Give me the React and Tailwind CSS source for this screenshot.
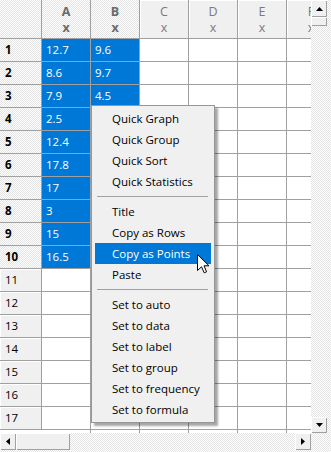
import React from 'react';

const colsA = ['12.7', '8.6', '7.9', '2.5', '12.4', '17.8', '17', '3', '15', '16.5'];
const colsB = ['9.6', '9.7', '4.5'];
const headers = ['A', 'B', 'C', 'D', 'E', 'F'];

const hatch =
  "bg-[image:repeating-conic-gradient(#e3e3e3_0%_25%,#ffffff_0%_50%)] [background-size:2px_2px]";
const raised = 'bg-[#f0f0f0] shadow-[inset_1px_1px_0_#ffffff,inset_-1px_-1px_0_#a0a0a0]';

const menuGroups = [
  ['Quick Graph', 'Quick Group', 'Quick Sort', 'Quick Statistics'],
  ['Title', 'Copy as Rows', 'Copy as Points', 'Paste'],
  ['Set to auto', 'Set to data', 'Set to label', 'Set to group', 'Set to frequency', 'Set to formula'],
];

function Tri({ dir }) {
  const pts = {
    up: '0,4 7,4 3.5,0',
    down: '0,0 7,0 3.5,4',
    left: '4,0 4,7 0,3.5',
    right: '0,0 0,7 4,3.5',
  }[dir];
  const w = dir === 'up' || dir === 'down' ? 7 : 4;
  const h = dir === 'up' || dir === 'down' ? 4 : 7;
  return (
    <svg width={w} height={h} viewBox={`0 0 ${w} ${h}`}>
      <polygon points={pts} fill="#000" />
    </svg>
  );
}

function ColHeader({ label, selected }) {
  return (
    <div
      className={`w-[49px] shrink-0 h-[39px] border-r border-b border-[#a0a0a0] flex flex-col items-center pt-[4px] leading-[16px] text-[12.5px] ${
        selected ? `${hatch} font-bold text-[#6a6a6a]` : 'bg-[#f0f0f0] shadow-[inset_1px_1px_0_#ffffff] text-[#7a7a7a]'
      }`}
    >
      <span>{label}</span>
      <span>x</span>
    </div>
  );
}

function Row({ n }) {
  const sel = n <= 10;
  return (
    <div className="flex h-[23px] shrink-0">
      <div
        className={`w-[42px] shrink-0 border-r border-b border-[#a0a0a0] flex items-center pl-[5px] text-black ${
          sel ? `${hatch} font-bold` : 'bg-[#f0f0f0] shadow-[inset_1px_1px_0_#ffffff]'
        }`}
      >
        {n}
      </div>
      {headers.map((h, i) => {
        const blue = sel && i < 2;
        const val = i === 0 ? colsA[n - 1] : i === 1 ? colsB[n - 1] : '';
        return (
          <div
            key={h}
            className={`w-[49px] shrink-0 border-r border-b border-[#a0a0a0] flex items-center pl-[4px] ${
              blue ? 'bg-[#0078d7] text-white' : 'bg-white text-black'
            }`}
          >
            {blue ? val : ''}
          </div>
        );
      })}
    </div>
  );
}

export default function App() {
  const rows = Array.from({ length: 17 }, (_, i) => i + 1);
  return (
    <div className="relative w-[331px] h-[452px] overflow-hidden bg-white font-['Open_Sans',sans-serif] text-[11.5px]">
      <div className="flex h-[433px]">
        {/* Grid */}
        <div className="w-[311px] shrink-0 overflow-hidden flex flex-col">
          <div className="flex shrink-0">
            <div className={`w-[42px] shrink-0 h-[39px] border-r border-b border-[#a0a0a0] ${hatch}`} />
            {headers.map((h, i) => (
              <ColHeader key={h} label={h} selected={i < 2} />
            ))}
          </div>
          {rows.map(n => (
            <Row key={n} n={n} />
          ))}
          <div className="flex flex-1">
            <div className="w-[42px] shrink-0" />
            {headers.map(h => (
              <div key={h} className="w-[49px] shrink-0 border-r border-[#a0a0a0]" />
            ))}
          </div>
        </div>

        {/* Vertical scrollbar */}
        <div className={`w-[20px] shrink-0 flex flex-col ${hatch}`}>
          <div className={`w-[16px] h-[17px] flex items-center justify-center ${raised}`}>
            <Tri dir="up" />
          </div>
          <div className={`w-[16px] h-[9px] ${raised}`} />
          <div className="flex-1" />
          <div className={`w-[16px] h-[16px] flex items-center justify-center ${raised}`}>
            <Tri dir="down" />
          </div>
        </div>
      </div>

      {/* Horizontal scrollbar */}
      <div className={`flex h-[19px] ${hatch}`}>
        <div className={`w-[16px] h-[17px] flex items-center justify-center ${raised}`}>
          <Tri dir="left" />
        </div>
        <div className={`w-[54px] h-[17px] ${raised}`} />
        <div className="flex-1" />
        <div className={`w-[16px] h-[17px] mr-[20px] flex items-center justify-center ${raised}`}>
          <Tri dir="right" />
        </div>
      </div>

      {/* Context menu */}
      <div className="absolute left-[91px] top-[105px] w-[124px] bg-[#f0f0f0] border border-[#979797] shadow-[3px_3px_2px_rgba(0,0,0,0.35)] py-[2px] px-[3px] text-black">
        {menuGroups.map((group, gi) => (
          <div key={gi}>
            {gi > 0 && (
              <div className="h-[9px] flex items-center pl-[2px] pr-[3px]">
                <div className="h-px w-full bg-[#a0a0a0]" />
              </div>
            )}
            {group.map(item => (
              <div
                key={item}
                className={`h-[21px] flex items-center pl-[17px] whitespace-nowrap ${
                  item === 'Copy as Points' ? 'bg-[#0078d7] text-white' : ''
                }`}
              >
                {item}
              </div>
            ))}
          </div>
        ))}
      </div>

      {/* Mouse cursor */}
      <svg className="absolute left-[197px] top-[254px]" width="13" height="20" viewBox="0 0 13 20">
        <path d="M0.5 0.5 L0.5 16.5 L4.5 12.8 L7.2 18.8 L9.6 17.8 L7 11.8 L12 11.8 Z" fill="#fff" stroke="#000" strokeWidth="1" strokeLinejoin="miter" />
      </svg>
    </div>
  );
}
